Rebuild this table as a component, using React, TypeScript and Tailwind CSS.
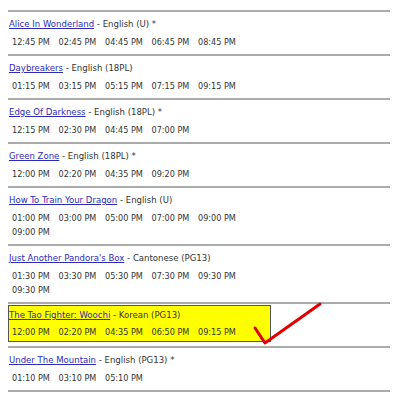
const movies = [
  { title: "Alice In Wonderland", info: "English (U) *", times: ["12:45 PM", "02:45 PM", "04:45 PM", "06:45 PM", "08:45 PM"] },
  { title: "Daybreakers", info: "English (18PL)", times: ["01:15 PM", "03:15 PM", "05:15 PM", "07:15 PM", "09:15 PM"] },
  { title: "Edge Of Darkness", info: "English (18PL) *", times: ["12:15 PM", "02:30 PM", "04:45 PM", "07:00 PM"] },
  { title: "Green Zone", info: "English (18PL) *", times: ["12:00 PM", "02:20 PM", "04:35 PM", "09:20 PM"] },
  { title: "How To Train Your Dragon", info: "English (U)", times: ["01:00 PM", "03:00 PM", "05:00 PM", "07:00 PM", "09:00 PM", "09:00 PM"] },
  { title: "Just Another Pandora's Box", info: "Cantonese (PG13)", times: ["01:30 PM", "03:30 PM", "05:30 PM", "07:30 PM", "09:30 PM", "09:30 PM"] },
  { title: "The Tao Fighter: Woochi", info: "Korean (PG13)", times: ["12:00 PM", "02:20 PM", "04:35 PM", "06:50 PM", "09:15 PM"], picked: true },
  { title: "Under The Mountain", info: "English (PG13) *", times: ["01:10 PM", "03:10 PM", "05:10 PM"] },
];

function Showing({ title, info, times, gap }: { title: string; info: string; times: string[]; gap: string }) {
  return (
    <>
      <div className="h-[16px] text-[9.5px] leading-[16px] whitespace-nowrap">
        <a href="#" className="text-[#2b2bb8] underline">{title}</a>
        <span className="text-[#333]"> - {info}</span>
      </div>
      <div className={`${gap} flex flex-wrap pl-[3px] text-[#333]`}>
        {times.map((t, i) => (
          <span key={i} className="h-[14px] w-[46.5px] shrink-0 leading-[14px] whitespace-nowrap">
            {t}
          </span>
        ))}
      </div>
    </>
  );
}

export default function App() {
  return (
    <div className="relative h-[400px] w-[398px] bg-white pt-[10px] pl-[8px] text-[9px] [font-family:'DejaVu_Sans_Condensed','Liberation_Sans',sans-serif]">
      {movies.map((m) =>
        m.picked ? (
          <div key={m.title} className="w-[382px] border-t-2 border-[#ababab] pt-[1px] pb-[4px]">
            <div className="w-[263px] border border-[#555] bg-[#ffff00] pt-[1px] pb-[2px]">
              <Showing {...m} gap="mt-[2px]" />
            </div>
          </div>
        ) : (
          <div key={m.title} className="w-[382px] border-t-2 border-[#ababab] pt-[4px] pb-[5px]">
            <div className="w-[263px] pl-[1px]">
              <Showing {...m} gap="mt-[3px]" />
            </div>
          </div>
        )
      )}
      <div className="w-[382px] border-t-2 border-[#ababab]" />
      <svg className="absolute left-0 top-0" width="398" height="400">
        <polyline points="255,328 265,343 320,304" fill="none" stroke="#e00000" strokeWidth="3" strokeLinecap="round" strokeLinejoin="round" />
      </svg>
    </div>
  );
}
